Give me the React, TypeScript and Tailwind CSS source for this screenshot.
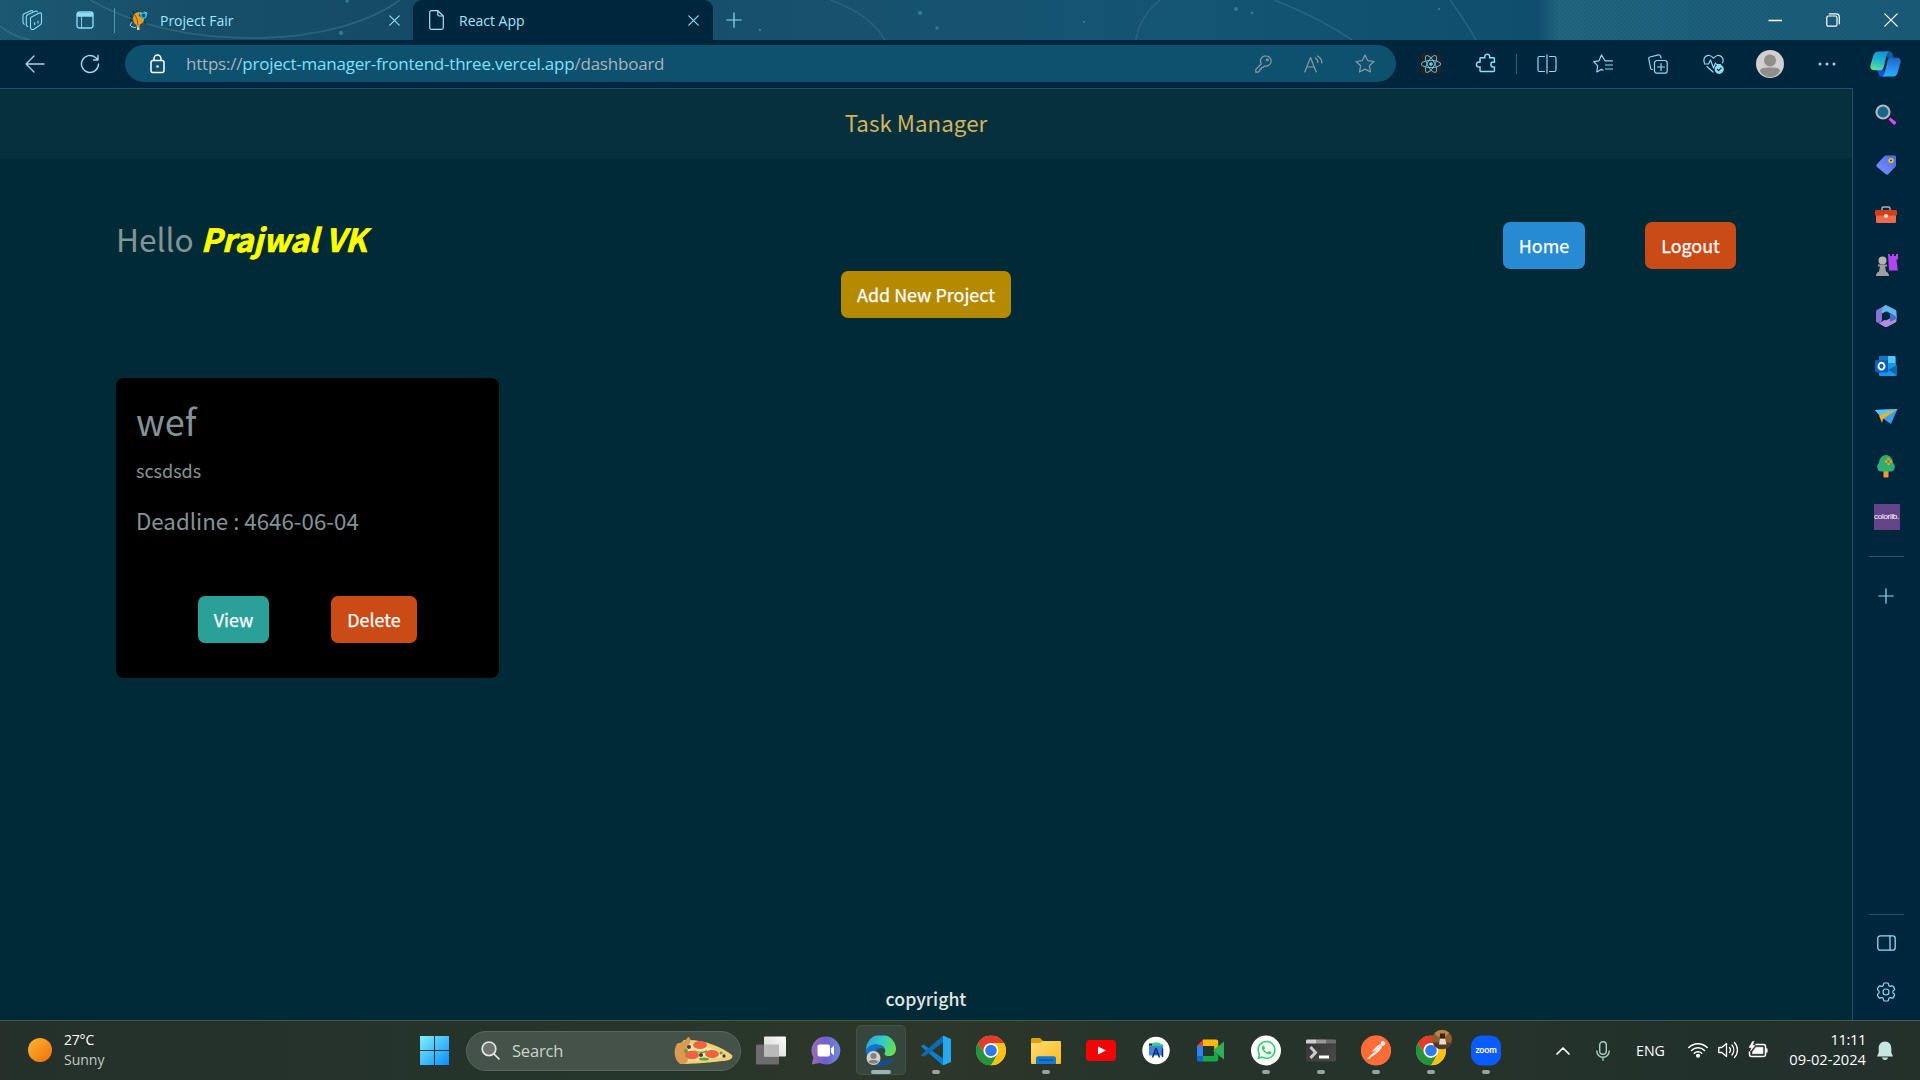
import React from "react";
import { SiPostman } from "react-icons/si";
import { FaWhatsapp, FaReact } from "react-icons/fa";
import { HiOutlineCog6Tooth } from "react-icons/hi2";
import { PiPuzzlePiece } from "react-icons/pi";

type Kids = { children?: React.ReactNode };

function Line({ w = 20, h = 20, box = "0 0 20 20", sw = 1.2, color = "#8edcf5", children }: Kids & { w?: number; h?: number; box?: string; sw?: number; color?: string }) {
  return (
    <svg width={w} height={h} viewBox={box} fill="none" stroke={color} strokeWidth={sw} strokeLinecap="round" strokeLinejoin="round" className="shrink-0">
      {children}
    </svg>
  );
}

function Pic({ w = 30, h = 30, box = "0 0 30 30", children }: Kids & { w?: number; h?: number; box?: string }) {
  return (
    <svg width={w} height={h} viewBox={box} className="shrink-0">
      {children}
    </svg>
  );
}

function Close() {
  return (
    <Line w={11} h={11} box="0 0 11 11">
      <path d="M.8.8l9.4 9.4M10.2.8L.8 10.2" />
    </Line>
  );
}

function ThemeArt() {
  return (
    <svg className="absolute inset-0 h-full w-full" viewBox="0 0 1920 40" preserveAspectRatio="none">
      <defs>
        <linearGradient id="sky" x1="0" x2="1">
          <stop offset="0" stopColor="#1c5a73" />
          <stop offset=".1" stopColor="#174f69" />
          <stop offset=".22" stopColor="#154b66" />
          <stop offset=".45" stopColor="#17536f" />
          <stop offset=".62" stopColor="#155675" />
          <stop offset=".8" stopColor="#104f6e" />
          <stop offset=".812" stopColor="#21667f" />
          <stop offset=".88" stopColor="#1d607b" />
          <stop offset="1" stopColor="#1a5a77" />
        </linearGradient>
        <pattern id="weave" width="4" height="4" patternUnits="userSpaceOnUse">
          <path d="M0 0h1v1H0zM2 2h1v1H2z" fill="#0b3c55" fillOpacity=".4" />
        </pattern>
      </defs>
      <rect width="1920" height="40" fill="url(#sky)" />
      <rect width="1920" height="40" fill="url(#weave)" />
      <g fill="none" stroke="#4d8298" strokeOpacity=".4" strokeWidth="1.800">
        <path d="M90 0C140 28 200 39 260 38C320 37 370 22 400 0" />
        <path d="M0 26C10 34 20 38 30 40" />
        <path d="M830 0Q870 14 885 40M1136 40Q1140 16 1160 0" strokeOpacity=".3" />
        <path d="M1274 0Q1320 18 1352 40M1450 0Q1466 22 1476 40" strokeOpacity=".35" />
      </g>
      <g fill="#4f9fb9" fillOpacity=".5">
        <circle cx="341" cy="33" r="2.200" /><circle cx="920" cy="13" r="2.200" /><circle cx="937" cy="28" r="1.800" />
        <circle cx="1236" cy="9" r="2" /><circle cx="1252" cy="13" r="1.300" /><circle cx="1439" cy="9" r="1.300" /><circle cx="1084" cy="22" r="1.200" />
        <circle cx="760" cy="30" r="1.200" /><circle cx="347" cy="1" r="1.800" />
      </g>
    </svg>
  );
}

function TabBar() {
  return (
    <header className="relative flex h-10 shrink-0 items-center bg-[#17536f] font-['Open_Sans',sans-serif] text-[#9fe6fb]">
      <ThemeArt />
      <div className="relative flex h-10 w-[413px] items-center">
        <div className="flex w-[60px] pl-[22px]">
          <Line w={21} h={20} box="0 0 21 20" sw={1.1}>
            <path d="M8.500 8.200c0-.6.3-1 .9-1.300l8-3.800c1.200-.5 2.100 0 2.100 1.100v8.400c0 .8-.3 1.500-1 2l-6.600 4.600c-1.700 1-3.400.3-3.400-1.600zM12.700 12.500v2M16 11v2" />
            <path d="M5.700 16.500c-1-.3-1.400-1-1.400-2V7c0-1 .4-1.700 1.300-2.200l7.600-3.600c1-.4 1.800-.2 2.200.7" />
            <path d="M2.200 14.300C1.400 14 1 13.300 1 12.300V5.800c0-1 .4-1.600 1.200-2L9 .7c.8-.3 1.400-.1 1.800.5" />
          </Line>
        </div>
        <div className="flex w-[54px] pl-4">
          <Line w={18} h={18} box="0 0 18 18" sw={1.300}>
            <rect x="1" y="1" width="16" height="16" rx="2.500" />
            <path d="M1.500 2.500h15v2.500h-15z" fill="#8edcf5" />
            <path d="M5.500 5v12" strokeWidth=".9" />
          </Line>
        </div>
        <div className="h-[25px] w-px bg-[#5795ab]" />
        <div className="ml-[14px] mr-[11px] flex">
          <Pic w={20} h={20} box="0 0 20 20">
            <path d="M8 2.500c1.500-1 3-.5 3 .8L9.500 5c.5 1.500 2 2.500 3.500 2l2 1c.5 3-1.500 5.500-4 6.500l-1 3.500H8L7.500 15C4.500 13.500 3.500 9 4.500 6 5 4.500 6.500 3 8 2.500z" fill="#f09a17" />
            <path d="M3 12l-2 3 2 2 4 .5M15 2l3 1-1 3M12 2l-1 3" stroke="#a3cfdf" fill="none" />
            <path d="M4 1l1 2M8 0v1.500M1 6l2 1M1 10l2-.5M15 12l2 1.500" stroke="#182a30" strokeWidth="1.500" />
            <circle cx="14.500" cy="5.500" r="2.500" fill="none" stroke="#18b4de" strokeWidth="1.600" /><path d="M6 5l2 4 1 6" stroke="#8b4e0b" fill="none" /><path d="M8 17.500h2.500V20H8z" fill="#cfd6da" />
          </Pic>
        </div>
        <span className="flex-1 text-[14px] tracking-[-0.010px]">Project Fair</span>
        <div className="mr-[13px]"><Close /></div>
      </div>
      <div className="relative flex h-10 w-[300px] items-center rounded-t-[9px] bg-[#00263e] pl-4 pr-[14px]">
        <Line w={15} h={20} box="0 0 15 20" color="#a6e4f7">
          <path d="M2.500.7h6.300L14.300 6v11.500c0 1.200-.7 1.800-1.800 1.800h-10C1.400 19.300.7 18.700.7 17.500v-15C.7 1.300 1.400.7 2.500.7zM8.800.9v3.600c0 1 .5 1.500 1.500 1.500h3.800" />
        </Line>
        <span className="ml-[15px] flex-1 text-[14px]">React App</span>
        <Close />
      </div>
      <div className="relative ml-[13px] flex flex-1">
        <Line w={16} h={16} box="0 0 16 16"><path d="M8 .8v14.400M.8 8h14.400" /></Line>
      </div>
      <div className="relative flex items-center gap-[44px] pr-[22px]">
        <Line w={14} h={14} box="0 0 14 14" color="#fff" sw={1.300}><path d="M1 7.500h12.500" /></Line>
        <Line w={14} h={14} box="0 0 14 14" color="#fff"><rect x=".8" y="3" width="10.200" height="10.200" rx="1.500" /><path d="M3.300.8h7c2 0 3 1 3 3v7" /></Line>
        <Line w={14} h={14} box="0 0 14 14" color="#fff"><path d="M.8.8l12.400 12.400M13.200.8L.8 13.200" /></Line>
      </div>
    </header>
  );
}

function Copilot() {
  return (
    <Pic w={31} h={28} box="0 0 32 28">
      <defs>
        <linearGradient id="cpA" x1=".6" x2=".3" y1="0" y2="1"><stop offset="0" stopColor="#1391d8" /><stop offset=".5" stopColor="#20b5cf" /><stop offset="1" stopColor="#5fe38a" /></linearGradient>
        <linearGradient id="cpB" x1=".5" x2=".4" y1="0" y2="1"><stop offset="0" stopColor="#2064c9" /><stop offset=".6" stopColor="#2a93f3" /><stop offset="1" stopColor="#1fb4f8" /></linearGradient>
      </defs>
      <path d="M14 1h6c2 0 3 1 3.500 3l1 4h-6z" fill="#0c5f9d" />
      <path d="M7 20h7l3 7h-4c-2.500 0-3.600-1-4.200-3z" fill="#174fe0" />
      <path d="M9 1h11c-2 1-2.600 2.500-3.200 5l-2.500 11c-.6 2.500-2 3.500-4.300 3.500H4.500C1 20.500-.2 18 .6 15L3.500 5C4.300 2.400 6 1 9 1z" fill="url(#cpA)" />
      <path d="M22 7.500h6c3 0 4.300 2.200 3.500 5l-3 10.500c-.8 2.700-2.500 4-5.500 4H12c2-.7 2.700-2.300 3.300-4.800L18 11c.6-2.500 1.700-3.500 4-3.500z" fill="url(#cpB)" />
    </Pic>
  );
}

function Toolbar() {
  return (
    <div className="flex h-12 shrink-0 items-center bg-[#00263e] pb-px font-['Open_Sans',sans-serif]">
      <div className="flex w-[125px] items-center gap-[35px] pl-[25px]">
        <Line w={20} h={18} box="0 0 20 18" sw={1.300} color="#9fd9ee"><path d="M19 9H1M9 1L1 9l8 8" /></Line>
        <Line sw={1.400} color="#9fd9ee"><path d="M18.500 10A8.500 8.500 0 1 1 15.500 3.500L18 6M18 1.500V6h-4.500" /></Line>
      </div>
      <div className="flex h-[37px] w-[1271px] items-center rounded-full bg-[#0d516f] pl-[25px] pr-[21px]">
        <Line w={15} h={20} box="0 0 15 20" sw={1.500} color="#fff"><rect x="1" y="6.500" width="13" height="12" rx="2" /><path d="M4 6.500V4.500a3.500 3.500 0 0 1 7 0v2" /><circle cx="7.500" cy="12.500" r=".6" fill="#fff" /></Line>
        <span className="ml-[21px] flex-1 whitespace-nowrap text-[17px] tracking-[-0.220px] text-[#abb3b9]">
          https://<span className="text-[#7fe0fb]">project-manager-frontend-three.vercel.app</span>/dashboard
        </span>
        <div className="flex items-center gap-[32px]">
          <Line w={17} h={18} box="0 0 17 18" color="#8a9aa3"><path d="M11 .8a5.200 5.200 0 1 1-1.500 10.200L8 12.500H6.500V14H5v1.500L3 17.200H.8V14.500l5.500-5.700A5.200 5.200 0 0 1 11 .8z" /><circle cx="12.300" cy="4.800" r=".9" /></Line>
          <Line w={19} h={18} box="0 0 19 18" color="#8a9aa3"><path d="M.8 17L6.500 2.500 12.200 17M2.800 12h7.400M11.500 3c1.500 1 2.300 2.500 2.300 4.500M13.500 1c2.800 1.500 4.300 4 4.300 7" /></Line>
          <Line w={20} h={20} box="0 0 20 20" color="#8a9aa3"><path d="M10 1l2.700 5.600 6.200.9-4.500 4.300 1.100 6.200L10 15.100 4.500 18l1.100-6.200L1.100 7.500l6.200-.9z" /></Line>
        </div>
      </div>
      <div className="ml-2 flex items-center">
        <div className="flex w-[54px] justify-center"><span className="flex h-5 w-5 items-center justify-center bg-[#242223]"><FaReact size={20} color="#68cdee" /></span></div>
        <div className="flex w-[56px] justify-center"><PiPuzzlePiece size={23} color="#8edcf5" /></div>
        <div className="mx-[2px] h-5 w-px bg-[#2d5f7a]" />
        <div className="flex w-[56px] justify-center"><Line><path d="M7.500 2.500h-5c-1 0-1.500.6-1.500 1.500v12c0 1 .5 1.500 1.500 1.500h5M12.500 2.500h5c1 0 1.500.6 1.500 1.500v12c0 1-.5 1.500-1.500 1.500h-5M10 .8v18.400" /></Line></div>
        <div className="flex w-[55px] justify-center"><Line><path d="M12 6.800L8.500 1 6 6.800l-5.300.9 4 4.200-1 6.100 4.800-2.600 1.500.8M12.500 6.800h7M12.500 11h7M12.500 15h7" /></Line></div>
        <div className="flex w-[55px] justify-center"><Line><rect x="6.500" y="6.500" width="12.700" height="12.700" rx="2.500" /><path d="M13 9.500v7M9.500 13h7M4.500 15.500l-1.200-.4c-.8-.3-1-.8-.8-1.600L.8 5c-.2-1 .2-1.700 1.200-2L10.500.8c1-.2 1.700.2 2 1.200l.6 2" /></Line></div>
        <div className="flex w-[56px] justify-center"><Line w={21} h={20} box="0 0 21 20"><path d="M1.500 9C-.5 4 3 1 6.500 1.500c2 .3 3 1.500 4 2.700 1-1.200 2-2.400 4-2.700 3.500-.5 7 3 5 7.500M1.500 10h4l2-4 3 8 2-5 1 1.500h4M4 12.500l6 5.500" /><circle cx="16.200" cy="15.300" r="4" fill="#8edcf5" /><path d="M14.500 15.500l1.200 1.200 2.300-2.500" stroke="#00263e" /></Line></div>
        <div className="flex w-[57px] justify-center"><Pic w={28} h={28} box="0 0 28 28"><circle cx="14" cy="14" r="14" fill="#d2d0ce" /><circle cx="14" cy="10.500" r="6" fill="#918d89" /><path d="M4 21c0-3 4-3.500 10-3.500S24 18 24 21c-2 4-6 6-10 6S6 25 4 21z" fill="#918d89" /></Pic></div>
        <div className="flex w-[57px] justify-center"><Pic w={18} h={4} box="0 0 18 4"><g fill="#8edcf5"><circle cx="2" cy="2" r="1.500" /><circle cx="9" cy="2" r="1.500" /><circle cx="16" cy="2" r="1.500" /></g></Pic></div>
        <div className="flex w-[60px] justify-center"><Copilot /></div>
      </div>
    </div>
  );
}

function SideItem({ children }: Kids) {
  return <div className="flex h-[50.250px] w-full items-center justify-center">{children}</div>;
}

function Sidebar() {
  return (
    <aside className="flex w-[68px] shrink-0 flex-col items-center border-l border-[#22506a] bg-[#00263e] pr-px pt-[1.500px]">
      <SideItem>
        <Pic w={22} h={22} box="0 0 22 22"><path d="M13.500 15.500l2-2 5.500 4.500c1 1-1.500 3.500-2.500 2.500z" fill="#d24bf5" /><circle cx="8" cy="8" r="6.500" fill="#14668f" stroke="#b6b4b4" strokeWidth="2.200" /></Pic>
      </SideItem>
      <SideItem>
        <Pic w={22} h={22} box="0 0 22 22"><defs><linearGradient id="tag" x1="1" x2="0" y2="1"><stop stopColor="#4a68e8" /><stop offset="1" stopColor="#7f96ff" /></linearGradient></defs><path d="M11 1.500h8.500c1 0 1.500.5 1.500 1.500v8c0 .8-.2 1.300-.8 1.900l-6.800 7c-1 1-1.800 1-2.800 0l-8.500-7c-1-1-1-2 0-3l7-7.500c.6-.6 1.100-.9 1.900-.9z" fill="url(#tag)" /><circle cx="16" cy="6.500" r="1.800" fill="#333" stroke="#f5c518" strokeWidth="1.600" /></Pic>
      </SideItem>
      <SideItem>
        <Pic w={22} h={20} box="0 0 22 20"><path d="M7 5V3.500C7 2.500 7.500 2 8.500 2h5c1 0 1.500.5 1.500 1.500V5" fill="none" stroke="#a6b5bd" strokeWidth="1.400" /><rect x="1" y="9" width="20" height="9" rx="1.500" fill="#ec6a4b" /><rect x="0" y="5" width="22" height="5.500" rx="1.300" fill="#d03f17" /><circle cx="11" cy="11" r="2.100" fill="#d8d8d8" /></Pic>
      </SideItem>
      <SideItem>
        <Pic w={23} h={24} box="0 0 23 24"><path d="M13 1h2v2h2V1h2v2h2V1h2v5l-1.500 1 1 8 .5 2.500h-9z" fill="#b145ef" /><circle cx="7.500" cy="7.500" r="4" fill="#b5b3b1" /><path d="M3 11.500h9v2h-2l1 5c2 1 3 2.500 3 4.500H1c0-2 1-3.500 3-4.500l1-5H3z" fill="#a19f9d" /></Pic>
      </SideItem>
      <SideItem>
        <Pic w={22} h={22} box="0 0 22 22"><path d="M11 0L2.500 4.500C1.300 5.300 1 6 1 7.500v8.500c0 1 1 1.500 2 1.500 3 0 4-1 4-3.500V8.500L13 4z" fill="#8577d2" /><path d="M11 0l9 4.500c1 .6 1.500 1.500 1.500 3v7c0-2-1-3-2.500-4L12 6.500 7 8.500C6 4 8 1.500 11 0z" fill="#5fb6f0" /><path d="M21.500 10v5c0 1.500-.5 2-1.500 2.700L13 21.500c-1.500.8-2.500.8-4 0L1.500 17c1.500 1 3.500.8 5-.2l8.500-5z" fill="#b58be0" /><path d="M15 8l5 3c1.500 1 1.500 2.500 0 3.500L15 17z" fill="#3f6fd0" /><path d="M11 6.500l4 2.300v4.500L11 15.500l-4-2.300V8.800z" fill="#00263e" /></Pic>
      </SideItem>
      <SideItem>
        <Pic w={22} h={22} box="0 0 22 22"><rect x="4" y="1" width="17" height="20" rx="1.500" fill="#1996e0" /><path d="M4 1h9v7H4z" fill="#1277c4" /><path d="M13 1h7v7h-7z" fill="#52c8f8" /><path d="M22 10l-9 6v4.500h8c.7 0 1-.3 1-1z" fill="#2298dd" /><path d="M13 15l9 5V10z" fill="#1066b0" /><rect x="0" y="5" width="13" height="12.500" rx="1.300" fill="#0c5fb6" /><ellipse cx="6.500" cy="11.200" rx="3" ry="3.400" fill="none" stroke="#fff" strokeWidth="1.900" /></Pic>
      </SideItem>
      <SideItem>
        <Pic w={23} h={18} box="0 0 23 18"><path d="M0 3L22.500 2 16 17l-6-4z" fill="#3b9cf2" /><path d="M0 3L22.500 2 5 9z" fill="#55c4fb" /><path d="M4 8.500L22.500 2 8 12l-1 4z" fill="#f4b11c" /></Pic>
      </SideItem>
      <SideItem>
        <Pic w={20} h={24} box="0 0 20 24"><rect x="7.500" y="16" width="5" height="7.500" rx=".8" fill="#f19b2b" /><path d="M10 1c4 0 7 4 7 8 2.500 1.500 3 8.500-2.500 8.500h-9C0 17.500.5 10.500 3 9c0-4 3-8 7-8z" fill="#2fae74" /><path d="M9 6.500h2.500V4h2v2.500H16v2h-2.500V11h-2V8.500H9z" fill="#f7a71c" /><circle cx="12.500" cy="7.500" r="1.200" fill="#b85d12" /></Pic>
      </SideItem>
      <SideItem>
        <div className="ml-px flex h-[26px] w-[26px] items-center justify-center overflow-hidden bg-[#64458a] font-['Liberation_Sans',sans-serif] text-[8px] tracking-[-0.300px] text-white">colorlib.</div>
      </SideItem>
      <div className="mt-[14px] h-px w-[35px] bg-[#285470]" />
      <div className="mt-[31px]"><Line w={16} h={16} box="0 0 16 16"><path d="M8 .8v14.400M.8 8h14.400" /></Line></div>
      <div className="mt-auto h-px w-[35px] bg-[#285470]" />
      <div className="mt-[20px]"><Line w={19} h={16} box="0 0 19 16" sw={1.300}><rect x=".8" y=".8" width="17.400" height="14.400" rx="2.500" /><path d="M13 1v14" /></Line></div>
      <div className="mb-[16px] mt-[29px]"><HiOutlineCog6Tooth size={24} color="#8edcf5" strokeWidth={1.200} /></div>
    </aside>
  );
}

function Btn({ className, children }: Kids & { className: string }) {
  return <button className={`flex h-[47px] items-center justify-center rounded-[7px] pb-px text-[17.900px] font-normal text-white [-webkit-text-stroke:0.250px_#fff] ${className}`}>{children}</button>;
}

function Page() {
  return (
    <main className="flex min-w-0 flex-1 flex-col bg-[#002b36] font-['Noto_Sans_CJK_SC',sans-serif] text-[#839496]">
      <nav className="flex h-[70px] shrink-0 items-center justify-center bg-[#06303c] pb-[2px] pr-5 text-[22.400px] text-[#d3b35e]">
        Task Manager
      </nav>
      <div className="mt-[46px] flex h-[64px] items-start justify-between px-[116px]">
        <h2 className="mt-[13px] text-[31.600px] leading-[40px]">Hello <b className="italic text-[#ff0] [-webkit-text-stroke:0.700px_#ff0]">Prajwal VK</b></h2>
        <div className="mt-[17px] flex gap-[60px]">
          <Btn className="w-[82px] bg-[#268bd2]">Home</Btn>
          <Btn className="w-[91px] bg-[#cb4b16]">Logout</Btn>
        </div>
      </div>
      <div className="mt-[2px] flex justify-center">
        <Btn className="w-[170px] bg-[#b58900]">Add New Project</Btn>
      </div>
      <section className="ml-[116px] mt-[60px] flex h-[300px] w-[383px] shrink-0 flex-col rounded-[8px] bg-black px-5">
        <h1 className="mt-[18px] text-[36px] leading-[48px]">wef</h1>
        <p className="mt-[12px] text-[18px] leading-[28px]">scsdsds</p>
        <h5 className="mt-[20px] text-[22.300px] leading-[32px]">Deadline : 4646-06-04</h5>
        <div className="mb-[35px] mt-auto flex gap-[62px] pl-[62px]">
          <Btn className="w-[71px] bg-[#2aa198]">View</Btn>
          <Btn className="w-[86px] bg-[#cb4b16]">Delete</Btn>
        </div>
      </section>
      <footer className="mb-[7px] mt-auto text-center text-[17.700px] font-medium leading-[30px] text-[#e3e6e6]">copyright</footer>
    </main>
  );
}

function Chrome() {
  return (
    <Pic>
      <circle cx="15" cy="15" r="15" fill="#fbc116" />
      <path d="M2 7.500A15 15 0 0 1 28 7.500H15a7.500 7.500 0 0 0-6.500 11.300z" fill="#e33b2e" />
      <path d="M2 7.500L8.500 18.800a7.500 7.500 0 0 0 6.500 3.700l6.500-3.700L15 30A15 15 0 0 1 2 7.500z" fill="#229342" />
      <path d="M21.500 18.800L15 30A15 15 0 0 0 28 7.500H15z" fill="#fbc116" />
      <circle cx="15" cy="15" r="7.300" fill="#fff" /><circle cx="15" cy="15" r="5.800" fill="#2f79f0" />
    </Pic>
  );
}

function TaskIcon({ children, run, active }: Kids & { run?: boolean; active?: boolean }) {
  return (
    <div className="relative flex h-full w-[55px] items-center justify-center">
      {active && <div className="absolute inset-x-[2.500px] top-[4px] h-[50px] rounded-[5px] border border-[#435247] bg-[#37463c]" />}
      <div className="relative flex -translate-y-[0.500px]">{children}</div>
      {run && <div className="absolute bottom-[6px] left-[23.500px] h-1 w-2 rounded-full bg-[#9aa39d]" />}
      {active && <div className="absolute bottom-[6px] left-[17.500px] h-1 w-5 rounded-full bg-[#93b7b7]" />}
    </div>
  );
}

function Taskbar() {
  return (
    <footer className="flex h-[60px] shrink-0 items-center border-t border-[#48554f] bg-[linear-gradient(90deg,#25302b_0%,#25332c_18%,#26362a_32%,#2d3729_48%,#25332b_62%,#25332b_78%,#22302c_90%,#25302b_100%)] font-['Open_Sans',sans-serif] text-white">
      <div className="flex w-[420px] items-center pb-[2px] pl-7">
        <div className="h-6 w-6 rounded-full bg-linear-to-br from-[#f7b92e] to-[#f26a0b]" />
        <div className="ml-[12px] text-[14px] leading-[20px]"><div className="tracking-[-0.200px]">27°C</div><div className="text-[#c4cac7]">Sunny</div></div>
      </div>
      <Pic w={29} h={29} box="0 0 29 29"><defs><linearGradient id="win" x1="0" x2="1" y1="0" y2="1"><stop stopColor="#7ff0ff" /><stop offset="1" stopColor="#0a8dfb" /></linearGradient></defs><path d="M0 0h14v14H0zM15 0h14v14H15zM0 15h14v14H0zM15 15h14v14H15z" fill="url(#win)" /></Pic>
      <div className="ml-[17px] flex h-10 w-[275px] items-center rounded-full border border-[#5b665e] bg-[#445248] pl-[14px] pr-[7px]">
        <Line color="#e4e9e6" sw={1.700} w={19} h={19} box="0 0 19 19"><circle cx="8" cy="7.800" r="6.800" fill="#6c766f" /><path d="M13 13l5 5" /></Line>
        <span className="ml-[12px] flex-1 pt-px text-[16.500px] tracking-[-0.200px] text-[#cdd3cf]">Search</span>
        <Pic w={59} h={28} box="0 0 59 28">
          <path d="M10 3C30 2 48 10 58 18c2 4-4 6-10 6-14 2-30 3-42 3C2 20 4 8 10 3z" fill="#f0cf76" />
          <path d="M12 6c14 0 30 6 42 13-12 3-28 5-43 5-3-6-2-13 1-18z" fill="#fae39c" />
          <path d="M14 0c3 1 3 4 2 6-4 6-4 11-2 17-1 5-8 5-10 2C-1 20 0 9 4 6c3 0 7-1 10-6z" fill="#d99a51" />
          <g fill="#ee6242"><ellipse cx="26" cy="8" rx="7" ry="4" /><ellipse cx="18" cy="18" rx="7" ry="4.300" /><ellipse cx="38" cy="17" rx="7" ry="4" /></g>
          <g fill="#5ba437"><path d="M19 12c5 4 10 3 14 1v2c-5 2-11 1-14-3z" /><circle cx="12" cy="14" r="2" /><ellipse cx="30" cy="22" rx="5" ry="1.500" /><circle cx="47" cy="16" r="1.500" /></g>
          <g fill="#4a3553"><circle cx="15" cy="10" r="2" /><circle cx="27" cy="18" r="2" /><circle cx="50" cy="19" r="1.700" /></g>
        </Pic>
      </div>
      <div className="ml-[2.500px] flex h-[59px]">
        <TaskIcon>
          <Pic><defs><linearGradient id="tv" x1="1" x2="0" y2="1"><stop stopColor="#fff" /><stop offset="1" stopColor="#cfcfcf" /></linearGradient></defs><rect x="0" y="9" width="23" height="20" rx="1" fill="#6c6c6c" /><rect x="8" y="1" width="22" height="20" rx="1" fill="url(#tv)" /><path d="M8 9h15v12H8z" fill="#b9b9b9" /></Pic>
        </TaskIcon>
        <TaskIcon>
          <Pic><defs><linearGradient id="chat" x1="0" x2="1"><stop stopColor="#9b6bb5" /><stop offset=".5" stopColor="#6d5fca" /><stop offset="1" stopColor="#6f8ae0" /></linearGradient></defs><path d="M15 1a14 14 0 1 1-6 26.500L.8 29l1.600-7A14 14 0 0 1 15 1z" fill="url(#chat)" /><rect x="6.500" y="9" width="12.500" height="12" rx="2" fill="#fff" /><path d="M20 13l3-3v10l-3-3z" fill="#fff" /></Pic>
        </TaskIcon>
        <TaskIcon active>
          <Pic><defs><linearGradient id="ed1" x1="0" x2="1" y1=".2" y2=".5"><stop stopColor="#2aa3e0" /><stop offset=".5" stopColor="#30c9cc" /><stop offset="1" stopColor="#66e053" /></linearGradient></defs><path d="M0 15A15 15 0 0 1 30 13c0 5-3 7.500-7 7.500-3 0-5-1-4.500-2.500 1.500-2 1-6-3-8-5-2-13 0-15.500 5z" fill="url(#ed1)" /><path d="M0 15c2-7 14-9 18-2-5-2-9 2-8.500 7 .5 6 9 9 18 3-2 4-7 7-12.500 7A15 15 0 0 1 0 15z" fill="#1273cf" /><path d="M12 12c-4 4-3 11 3 13 5 1.500 9 0 12.500-2-2 4-7 7-12.500 7C8 28 5 18 12 12z" fill="#0c4ca3" /><circle cx="7.500" cy="22.500" r="7" fill="#d0cecc" /><circle cx="7.500" cy="20.500" r="3" fill="#84807d" /><path d="M2.500 26c1-2 9-2 10 0-2 3-8 3-10 0z" fill="#84807d" /></Pic>
        </TaskIcon>
        <TaskIcon run>
          <Pic><path d="M0 11l2.500-2L22 23v7z" fill="#0a7fcb" /><path d="M0 19.500L22 0v7L2.500 21.500z" fill="#0b6cb3" /><path d="M22 0l8 3.500v23L22 30z" fill="#27a9f2" /></Pic>
        </TaskIcon>
        <TaskIcon><Chrome /></TaskIcon>
        <TaskIcon run>
          <Pic><defs><linearGradient id="fo" x2="1" y2="1"><stop stopColor="#ffdc73" /><stop offset="1" stopColor="#fcbb22" /></linearGradient></defs><path d="M0 4c0-1 .5-1.500 1.500-1.500H9l3 3V9H0z" fill="#e0a010" /><path d="M0 7.500h9l3-2h17c.7 0 1 .3 1 1V27c0 1-.5 1.500-1.500 1.500h-27C.5 28.500 0 28 0 27z" fill="url(#fo)" /><path d="M5 28.500V23c0-1.500.8-2.300 2.300-2.300h15.400c1.500 0 2.300.8 2.300 2.300v5.500z" fill="#137ad1" /><path d="M8 24.700h14" stroke="#084c93" strokeWidth="1.200" /></Pic>
        </TaskIcon>
        <TaskIcon><Pic><rect x="0" y="4.500" width="30" height="21" rx="4" fill="#f40505" /><path d="M12 11l8 4-8 4z" fill="#fff" /></Pic></TaskIcon>
        <TaskIcon><Pic><circle cx="15" cy="15" r="13.700" fill="#fff" /><rect x="8" y="9" width="14" height="11" rx="1" fill="#3f83ee" /><path d="M9 10.500c0-3 3-3.500 6-3.500s6 .5 6 3.500z" fill="#37d07c" /><path d="M8 8h3v2H8z" fill="#222" /><path d="M15 12.500L11.500 22M15 12.500L18.500 22M13 18h4M21.500 13v8.500" stroke="#12304f" strokeWidth="1.500" fill="none" /></Pic></TaskIcon>
        <TaskIcon><Pic><path d="M7 4v6.500H1z" fill="#e94235" /><path d="M1 10.500h6v10H1z" fill="#2a83f8" /><path d="M1 20.500h6V26H3c-1.300 0-2-.7-2-2z" fill="#1565d8" /><path d="M7 4h13c1.500 0 2.200.8 2.200 2v5l-4 3.500v-4H7z" fill="#fdba0c" /><path d="M7 20.500h11v-5l4.200 4V24c0 1.300-.8 2-2 2H7z" fill="#12a94b" /><path d="M17 15l11-9v18z" fill="#2fae57" /></Pic></TaskIcon>
        <TaskIcon run><div className="flex h-[30px] w-[30px] items-center justify-center rounded-full bg-white"><FaWhatsapp size={21} color="#2bd366" /></div></TaskIcon>
        <TaskIcon run><Pic><defs><linearGradient id="te" y2="1" x2="1"><stop stopColor="#333" /><stop offset="1" stopColor="#4b4b4b" /></linearGradient></defs><rect y="4" width="30" height="22" rx="1.500" fill="url(#te)" /><path d="M1.500 4H10v4H0V5.500C0 4.500.5 4 1.500 4z" fill="#cfcfcf" /><path d="M10 4h10v4H10z" fill="#999" /><path d="M20 4h8.500c1 0 1.500.5 1.500 1.500V8H20z" fill="#6d6d6d" /><path d="M4.500 11.500l5 5.500-5 5.500" fill="none" stroke="#ccc" strokeWidth="3" /><path d="M13 20h10v3H13z" fill="#fff" /></Pic></TaskIcon>
        <TaskIcon run><div className="flex h-[30px] w-[30px] items-center justify-center rounded-full bg-[radial-gradient(circle,#fff_60%,#ff6c37_62%)]"><SiPostman size={30} color="#ff6c37" /></div></TaskIcon>
        <TaskIcon run>
          <Chrome />
          <div className="absolute -top-[6px] left-[16px]"><Pic w={20} h={20} box="0 0 20 20"><circle cx="10" cy="10" r="10" fill="#8f5d2e" /><path d="M3 3.500A10 10 0 0 1 17 3l-3 4H5z" fill="#b9854c" /><path d="M1 13h18a10 10 0 0 1-17 3z" fill="#55382a" /><path d="M8 9h5l1.500 6H7z" fill="#e6ddd2" /><path d="M8 4h5v5H8z" fill="#3a251b" /></Pic></div>
        </TaskIcon>
        <TaskIcon run>
          <div className="flex h-[30px] w-[30px] items-center justify-center rounded-[11px] bg-[#0b5cff] pb-[2px] font-[Lato,sans-serif] text-[9px] font-bold leading-none tracking-[-0.200px]">zoom</div>
        </TaskIcon>
      </div>
      <div className="ml-auto flex items-center">
        <Line w={14} h={8} box="0 0 14 8" color="#fff" sw={1.700}><path d="M1 7l6-6 6 6" /></Line>
        <div className="ml-[26px]"><Line w={14} h={20} box="0 0 14 20" color="#a9cfc8" sw={1.400}><rect x="3.700" y=".8" width="6.600" height="12.500" rx="3.300" /><path d="M.8 10a6.200 6.200 0 0 0 12.400 0M7 16.300v3" /></Line></div>
        <span className="ml-[26px] w-[30px] text-[14.200px]">ENG</span>
        <div className="ml-[22px] pb-[2px]"><Line w={20} h={16} box="0 0 20 16" color="#fff" sw={1.500}><path d="M.8 5.500a13 13 0 0 1 18.400 0M3.500 8.500a9.200 9.200 0 0 1 13 0M6.300 11.200a5.200 5.200 0 0 1 7.400 0" /><circle cx="10" cy="13.700" r="1.300" fill="#fff" /></Line></div>
        <div className="ml-[10px] pb-px"><Line w={20} h={18} box="0 0 20 18" color="#fff" sw={1.300}><path d="M.8 6.500v5h3L8.500 15.500V2.500L3.800 6.500zM11.500 6.500a4 4 0 0 1 0 5M14 4a8 8 0 0 1 0 10M16.500 1.500a11 11 0 0 1 0 15" /></Line></div>
        <div className="ml-[10px] pb-[2px]"><Line w={20} h={18} box="0 0 20 18" color="#fff" sw={1.500}><path d="M8 3.500h7.500c1.300 0 2 .7 2 2v8c0 1.300-.7 2-2 2h-12c-1.300 0-2-.7-2-2V11M18.800 8v3" /><path d="M8 6.200h7v6.500H4.500V11z" fill="#fff" strokeWidth=".5" /><path d="M4.500.5L1 6.500h2.500L2.500 10 7 4.500H4.500L6 .5z" fill="#fff" strokeWidth=".5" /></Line></div>
        <div className="ml-4 w-[82px] whitespace-nowrap pb-[3px] text-right text-[14.700px] leading-[20px]"><div className="tracking-[-0.400px]">11:11</div><div>09-02-2024</div></div>
        <div className="ml-[11px] mr-[27px]"><Pic w={16} h={20} box="0 0 16 20"><path d="M8 .5c4 0 6.300 3 6.300 6.500v4.500l1.700 4H0l1.700-4V7C1.700 3.500 4 .5 8 .5zM5 16.500h6c-.3 1.500-1.300 2.500-3 2.500s-2.700-1-3-2.500z" fill="#c8e6e1" /></Pic></div>
      </div>
    </footer>
  );
}

export default function App() {
  return (
    <div className="flex h-[1080px] w-[1920px] flex-col overflow-hidden bg-[#00263e]">
      <TabBar />
      <Toolbar />
      <div className="flex min-h-0 flex-1">
        <div className="flex min-w-0 flex-1 border-t border-[#22506a]"><Page /></div>
        <Sidebar />
      </div>
      <Taskbar />
    </div>
  );
}
